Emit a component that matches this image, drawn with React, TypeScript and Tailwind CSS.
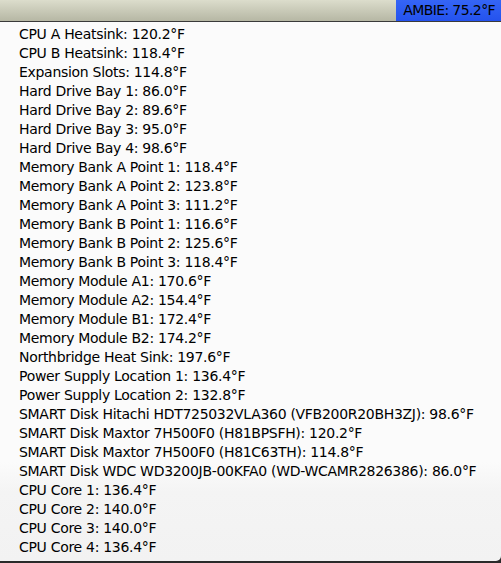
import React from "react";

const items: string[] = [
  "CPU A Heatsink: 120.2°F",
  "CPU B Heatsink: 118.4°F",
  "Expansion Slots: 114.8°F",
  "Hard Drive Bay 1: 86.0°F",
  "Hard Drive Bay 2: 89.6°F",
  "Hard Drive Bay 3: 95.0°F",
  "Hard Drive Bay 4: 98.6°F",
  "Memory Bank A Point 1: 118.4°F",
  "Memory Bank A Point 2: 123.8°F",
  "Memory Bank A Point 3: 111.2°F",
  "Memory Bank B Point 1: 116.6°F",
  "Memory Bank B Point 2: 125.6°F",
  "Memory Bank B Point 3: 118.4°F",
  "Memory Module A1: 170.6°F",
  "Memory Module A2: 154.4°F",
  "Memory Module B1: 172.4°F",
  "Memory Module B2: 174.2°F",
  "Northbridge Heat Sink: 197.6°F",
  "Power Supply Location 1: 136.4°F",
  "Power Supply Location 2: 132.8°F",
  "SMART Disk Hitachi HDT725032VLA360 (VFB200R20BH3ZJ): 98.6°F",
  "SMART Disk Maxtor 7H500F0 (H81BPSFH): 120.2°F",
  "SMART Disk Maxtor 7H500F0 (H81C63TH): 114.8°F",
  "SMART Disk WDC WD3200JB-00KFA0 (WD-WCAMR2826386): 86.0°F",
  "CPU Core 1: 136.4°F",
  "CPU Core 2: 140.0°F",
  "CPU Core 3: 140.0°F",
  "CPU Core 4: 136.4°F",
];

export default function App() {
  return (
    <div
      className="w-[501px] h-[563px] overflow-hidden bg-[#2a2a2a] flex flex-col"
      style={{ fontFamily: '"DejaVu Sans", "Liberation Sans", sans-serif' }}
    >
      {/* menu bar */}
      <div className="h-[22px] shrink-0 flex justify-end border-b border-[#3a3a3a] bg-gradient-to-b from-[#dcddcc] to-[#b6b7a4]">
        <div className="h-[21px] pl-[7px] pr-[6px] flex items-center bg-gradient-to-b from-[#3565f6] to-[#2452ee] text-black text-[14px] tracking-[-0.6px] leading-[21px]">
          AMBIE: 75.2°F
        </div>
      </div>

      {/* dropdown menu */}
      <div className="h-[539px] shrink-0 rounded-br-[5px] overflow-hidden bg-[linear-gradient(to_bottom,#fbfbfb_0px,#fbfbfb_440px,#f4f4f4_470px,#f2f2f2_539px)]">
        <ul className="pt-[3px] pb-[4px] text-black text-[14px] leading-[19px] tracking-[-0.3px]">
          {items.map((t) => (
            <li key={t} className="h-[19px] pl-[19px] whitespace-nowrap">
              {t}
            </li>
          ))}
        </ul>
      </div>
    </div>
  );
}
